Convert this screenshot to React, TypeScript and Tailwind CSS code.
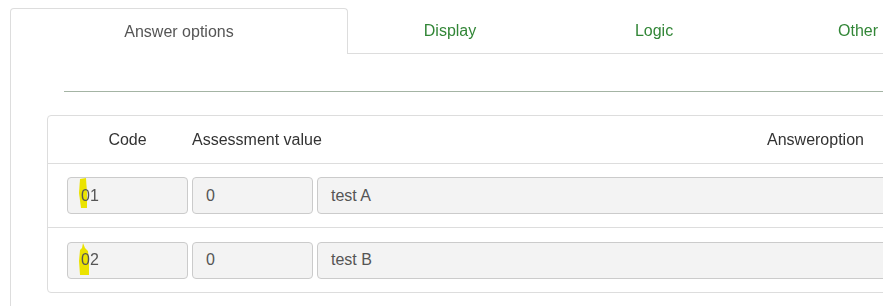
const tabs = [
  { label: 'Display', width: 'w-[204px]' },
  { label: 'Logic', width: 'w-[204px]' },
  { label: 'Other', width: 'w-[204px]' },
]

const rows = [
  { code: '01', assessment: '0', answer: 'test A', mark: 'M1 1 L7 0 L8 15 L8 30 L2 30 L0 15 Z' },
  { code: '02', assessment: '0', answer: 'test B', mark: 'M4 0 L6 5 L9 8 L10 20 L10 32 L1 32 L0 18 L1 7 L3 5 Z' },
]

// Fake input that can hold the highlighter stroke over its text
const Field = ({
  value,
  className,
  mark,
}: {
  value: string
  className: string
  mark?: string
}) => (
  <div
    className={`relative h-[37px] flex items-center px-[13px] bg-[#f3f3f3] border border-[#cbcbcb] rounded-[4px] text-[16px] text-[#555] shrink-0 ${className}`}
  >
    {mark && (
      <svg
        className="absolute left-[11px] top-0 mix-blend-multiply"
        width="11"
        height="34"
        viewBox="0 0 11 34"
      >
        <path d={mark} fill="#f7ef00" />
      </svg>
    )}
    <span className="relative">{value}</span>
  </div>
)

export default function App() {
  return (
    <div
      className="w-[883px] h-[306px] overflow-hidden bg-white pl-[10px] pt-[8px]"
      style={{ fontFamily: '"Liberation Sans", Arial, sans-serif' }}
    >
      {/* Tabs */}
      <div className="flex w-[1200px]">
        <div className="w-[338px] h-[46px] flex items-center justify-center border border-b-0 border-[#dddddd] rounded-t-[4px] text-[16px] text-[#555] shrink-0">
          Answer options
        </div>
        {tabs.map((tab) => (
          <div
            key={tab.label}
            className={`${tab.width} h-[46px] flex items-center justify-center border-b border-[#dddddd] text-[16px] text-[#328637] shrink-0`}
          >
            {tab.label}
          </div>
        ))}
        <div className="flex-1 border-b border-[#dddddd]" />
      </div>

      {/* Panel */}
      <div className="border-l border-[#dddddd] h-[260px] w-[1200px]">
        <div className="pt-[37px] pl-[53px]">
          <div className="h-px bg-[#a4b4a4]" />
        </div>

        <div className="ml-[36px] mt-[23px] w-[1200px] border border-[#dddddd] rounded-[4px]">
          <div className="h-[48px] flex items-center gap-[4px] pl-[19px] text-[16px] text-[#333] border-b border-[#dddddd]">
            <div className="w-[121px] text-center shrink-0">Code</div>
            <div className="w-[121px] shrink-0 whitespace-nowrap">Assessment value</div>
            <div className="pl-[450px]">Answeroption</div>
          </div>
          {rows.map((row, i) => (
            <div
              key={row.code}
              className={`h-[64px] flex items-center gap-[4px] pl-[19px] ${
                i === 0 ? 'border-b border-[#dddddd]' : ''
              }`}
            >
              <Field value={row.code} className="w-[121px]" mark={row.mark} />
              <Field value={row.assessment} className="w-[121px]" />
              <Field value={row.answer} className="w-[900px]" />
            </div>
          ))}
        </div>
      </div>
    </div>
  )
}
